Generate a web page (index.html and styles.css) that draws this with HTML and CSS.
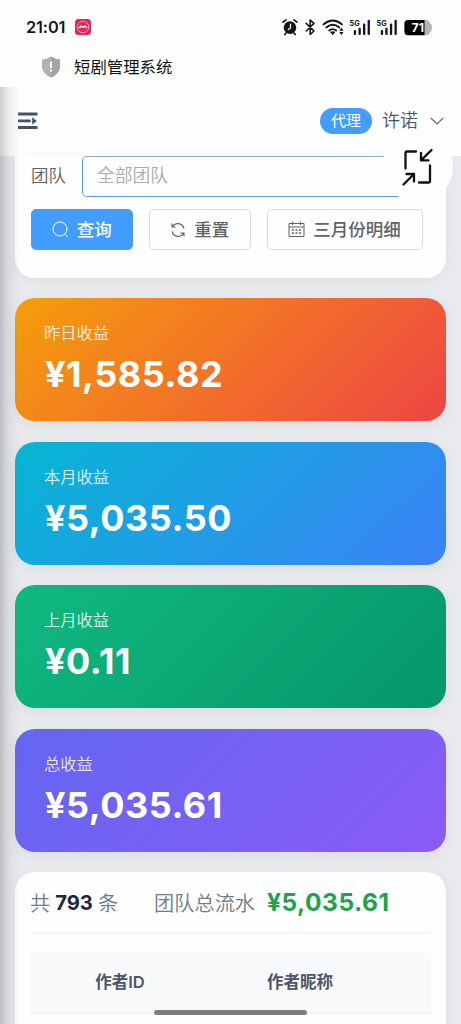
FILE: index.html
```html
<!DOCTYPE html>
<html lang="zh-CN">
<head>
<meta charset="utf-8">
<title>短剧管理系统</title>
<link rel="stylesheet" href="styles.css">
</head>
<body>
<div class="screen">
  <div class="status">
    <span class="clock">21:01</span>
    <svg class="app-icon" width="16" height="16" viewBox="0 0 16 16"><rect width="16" height="16" rx="3.5" fill="#e52656"/><circle cx="8" cy="8" r="5.8" fill="none" stroke="#ffb5c6" stroke-width=".9"/><path d="M4 9.3 5.700 7.300 8 8 10.300 7.300 12 9" fill="none" stroke="#fff" stroke-width="1.4"/></svg>
    <svg class="indicators" width="154" height="24" viewBox="280 14 154 24">
      <g fill="none" stroke="#151515" stroke-linecap="round">
        <circle cx="290" cy="26.6" r="6.3" fill="#151515" stroke="none"/>
        <path d="M283 21.2 286 18.8M297 21.2 294 18.8M286 32 284.8 33.6M294 32 295.2 33.6" stroke-width="1.7"/>
        <path d="M290.5 23.2V27L288.3 28.6" stroke="#fff" stroke-width="1.2"/>
        <path d="M306.2 22.4 314 30 310.2 33.5V19L314 22.4 306.2 30" stroke-width="1.6" stroke-linejoin="round"/>
        <path d="M323.5 23.4Q332.7 15.5 342 23.4M326.3 26.5Q332.7 21 339.3 26.5M329.2 29.4Q332.7 26.8 336.2 29.4" stroke-width="1.9"/>
      </g>
      <path d="M330 31Q332.7 29.6 335.4 31L332.7 34ZM339.2 29.7 341.5 26.8 343.5 29.7ZM339.2 31 341.5 34 343.5 31Z" fill="#151515"/>
      <g fill="#151515">
        <rect x="353.8" y="29" width="2.3" height="5" rx="1"/><rect x="358.5" y="26.7" width="2.3" height="7.3" rx="1"/><rect x="363" y="22.5" width="2.3" height="11.5" rx="1"/><rect x="367.6" y="18.7" width="2.3" height="15.3" rx="1"/>
        <rect x="380.8" y="29" width="2.3" height="5" rx="1"/><rect x="385.3" y="26.7" width="2.3" height="7.3" rx="1"/><rect x="389.9" y="22.5" width="2.3" height="11.5" rx="1"/><rect x="394.5" y="18.7" width="2.3" height="15.3" rx="1"/>
      </g>
      <text class="net" x="349.6" y="24.6" textLength="10" lengthAdjust="spacingAndGlyphs">5G</text><text class="net" x="376.6" y="24.6" textLength="10" lengthAdjust="spacingAndGlyphs">5G</text>
      <path d="M424 19h2q3.2 0 4 3.2 2 1 2 3.4v2q0 2.400-2 3.400-.8 3.200-4 3.200h-2Z" fill="#b5b5b5"/>
      <path d="M408 19h16.500v15.200H408q-3.600 0-3.600-3.600v-8q0-3.600 3.600-3.600Z" fill="#000"/>
      <text class="battery" x="411.500" y="31" textLength="12.500" lengthAdjust="spacingAndGlyphs">71</text>
    </svg>
  </div>
  <div class="titlebar">
    <svg width="20" height="22" viewBox="0 0 20 22"><path d="M10 .5Q14 3.300 19 3.500V11Q18.500 18 10 21.500 1.500 18 1 11V3.500Q6 3.300 10 .5Z" fill="#b1b1b1"/><path d="M10 .5Q14 3.300 19 3.500V11Q18.500 18 10 21.500Z" fill="#a5a5a5"/><path d="M10 5.500V12" stroke="#fff" stroke-width="1.800"/><circle cx="10" cy="14.600" r="1.100" fill="#fff"/></svg>
    <span>短剧管理系统</span>
  </div>
  <div class="web">
    <header class="topbar">
      <svg width="20" height="18" viewBox="0 0 20 18"><path d="M0 2H19.500M0 8.900H12.700M0 15.500H19.500" stroke="#465166" stroke-width="2.800"/><path d="M14.200 5.200 18.800 8.900 14.200 12.500Z" fill="#465166"/></svg>
      <span class="role">代理</span>
      <span class="user">许诺</span>
      <svg width="14" height="8" viewBox="0 0 14 8"><path d="M.8 1 7 7 13.200 1" fill="none" stroke="#606774" stroke-width="1.100"/></svg>
    </header>
    <main class="content">
      <section class="panel filter">
        <div class="field"><label>团队</label><div class="select">全部团队</div></div>
        <div class="buttons">
          <div class="btn primary"><svg width="17" height="17" viewBox="0 0 17 17" fill="none" stroke="currentColor"><circle cx="8" cy="8" r="7"/><path d="M12.900 13 16 16"/></svg><span>查询</span></div>
          <div class="btn"><svg width="16" height="16" viewBox="0 0 16 16" fill="none" stroke="currentColor" stroke-width="1.150"><path d="M2 1.500V5H5.700M2.300 5C5 .2 12 .2 14 6.500M14 14.500V11H10.300M13.700 11C11 15.800 4 15.800 2 9.500"/></svg><span>重置</span></div>
          <div class="btn"><svg width="17" height="17" viewBox="0 0 17 17" fill="none" stroke="currentColor"><path d="M1 2.500H16V15.500H1ZM1 6H16M4.500.5V4M12.500.5V4"/><path d="M4 9H13M4 12H13" stroke-width="1.300" stroke-dasharray="2 1.500"/></svg><span>三月份明细</span></div>
        </div>
      </section>
      <section class="stat orange"><div class="label">昨日收益</div><div class="amount">¥1,585.82</div></section>
      <section class="stat blue"><div class="label">本月收益</div><div class="amount">¥5,035.50</div></section>
      <section class="stat green"><div class="label">上月收益</div><div class="amount">¥0.11</div></section>
      <section class="stat violet"><div class="label">总收益</div><div class="amount">¥5,035.61</div></section>
      <section class="panel list">
        <div class="summary"><span>共</span><b>793</b><span>条</span><span class="flow">团队总流水</span><strong>¥5,035.61</strong></div>
        <div class="thead"><div>作者ID</div><div>作者昵称</div></div>
      </section>
    </main>
    <div class="edge"></div>
  </div>
  <div class="float-btn"><svg width="32" height="38" viewBox="0 0 32 38" fill="none" stroke="#111" stroke-width="2.300" stroke-linecap="round" stroke-linejoin="round"><path d="M3.500 20.500V5Q3.500 3.500 5 3.500H14M29.500 2 19 12.400M19 5V12.400H26.500M28 17.500V33Q28 34.500 26.500 34.500H17M1.500 36.500 12 26M4.500 26H12V33.500"/></svg></div>
  <div class="home-bar"></div>
</div>
</body>
</html>
```
FILE: styles.css
```css
* { box-sizing: border-box; }
body { margin: 0; font-family: Inter, "Noto Sans CJK SC", sans-serif; }
svg { display: block; flex: none; }
.screen { position: relative; width: 461px; height: 1024px; overflow: hidden; background: #fefefe; display: flex; flex-direction: column; }
.status { height: 53px; flex: none; display: flex; align-items: center; padding: 0 27px 0 26px; }
.clock { width: 49px; font-size: 16.300px; font-weight: 600; letter-spacing: -.1px; color: #171717; }
.indicators { margin-left: auto; }
.net { font: 700 8px Inter, sans-serif; fill: #151515; }
.battery { font: 700 12px Inter, sans-serif; fill: #fff; }
.titlebar { height: 34px; flex: none; display: flex; align-items: center; gap: 13px; padding: 0 0 6px 41px; font-size: 16.400px; line-height: 24px; color: #111; }
.web { position: relative; flex: 1; min-height: 0; background: #e9eaed; }
.topbar { height: 68.500px; background: #fefefe; display: flex; align-items: center; padding: 0 17px 0 18px; }
.role { margin-left: auto; width: 52px; height: 26px; border-radius: 13px; background: #439dfc; color: #fff; font-size: 15px; line-height: 25px; text-align: center; }
.user { margin: 0 12px 0 10px; font-size: 18px; line-height: 26px; color: #48536a; font-weight: 350; }
.content { padding: 0 15.500px 0 15px; display: flex; flex-direction: column; gap: 20.500px; }
.panel { background: #fefefe; box-shadow: 0 3px 14px rgba(60, 65, 80, .05); }
.filter { height: 122px; border-radius: 0 0 20px 20px; padding: 0 16px; }
.field { display: flex; height: 41px; }
.field label { width: 51px; font-size: 17.500px; line-height: 40px; color: #606266; font-weight: 350; }
.select { flex: 1; border: 1.500px solid #5a9ddb; border-top-color: #8caebe; border-radius: 5px; padding-left: 14px; font-size: 17.800px; line-height: 38px; color: #a8abb0; font-weight: 350; }
.buttons { display: flex; gap: 15.500px; margin: 12.500px 0 0 -.500px; }
.btn { height: 41px; width: 102.500px; border: 1px solid #d9dce1; border-radius: 5px; display: flex; justify-content: center; align-items: center; gap: 8px; font-size: 17.500px; font-weight: 500; line-height: 26px; color: #606266; }
.btn:last-child { width: 156px; }
.primary { background: #439dfe; border-color: #439dfe; color: #fff; }
.stat { height: 123px; flex: none; border-radius: 20px; padding: 22px 29px; color: #fff; box-shadow: 0 4px 14px rgba(60, 65, 80, .07); }
.orange { background: linear-gradient(135deg, #f59e0b, #ef4444); }
.blue { background: linear-gradient(135deg, #06b6d4, #3b82f6); }
.green { background: linear-gradient(135deg, #10b981, #059669); }
.violet { background: linear-gradient(135deg, #6366f1, #8b5cf6); }
.label { font-size: 16.300px; line-height: 26px; opacity: .85; font-weight: 350; }
.amount { font-size: 36px; line-height: 40px; margin: 8px 0 0 1px; font-weight: 700; letter-spacing: .5px; }
.list { height: 200px; flex: none; border-radius: 20px; padding: 0 15px; }
.summary { height: 62px; display: flex; align-items: center; border-bottom: 2px solid #f5f6f7; color: #707b8d; font-size: 20.200px; font-weight: 350; }
.summary b { color: #1f2738; font-weight: 700; margin: 0 5px; }
.flow { margin: 0 12px 0 36px; }
.summary strong { font-size: 24.500px; color: #21a34d; font-weight: 700; letter-spacing: .5px; }
.thead { margin-top: 18.500px; height: 61px; display: grid; grid-template-columns: 180px 180px; background: #f8f9fb; border-bottom: 1px solid #ebeef3; color: #4b566a; font-size: 16.500px; font-weight: 600; line-height: 58px; text-align: center; }
.edge { position: absolute; inset: 0 auto 0 0; width: 20px; background: linear-gradient(90deg, rgba(65, 65, 65, .26), rgba(65, 65, 65, .08) 45%, transparent); }
.float-btn { position: absolute; left: 382px; top: 132px; width: 71px; height: 70px; border-radius: 50%; background: #fefefe; display: grid; place-items: center; }
.home-bar { position: absolute; left: 154px; top: 1010px; width: 153px; height: 5px; border-radius: 3px; background: #7c7d7f; }
```
